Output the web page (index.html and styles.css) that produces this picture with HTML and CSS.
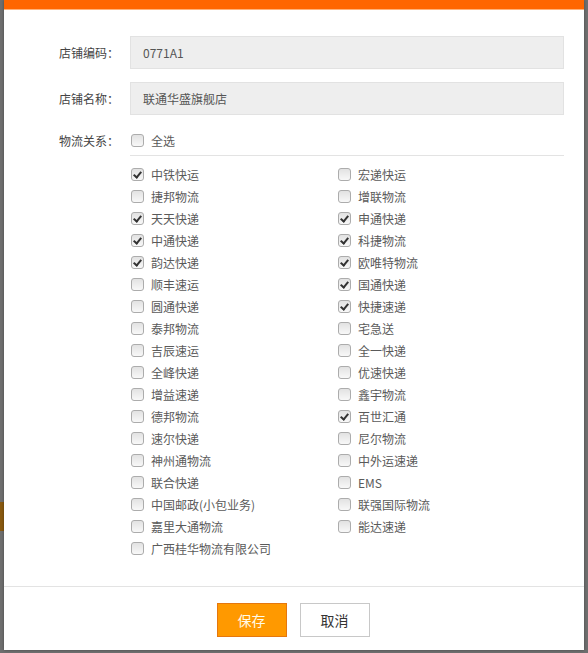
FILE: index.html
```html
<!DOCTYPE html>
<html lang="zh-CN">
<head>
<meta charset="utf-8">
<title>店铺物流关系</title>
<link rel="stylesheet" href="styles.css">
</head>
<body>
<div class="backdrop-hint"></div>
<div class="modal">
  <div class="modal-bar"></div>
  <div class="modal-body">
    <div class="field">
      <span class="label">店铺编码：</span>
      <div class="input">0771A1</div>
    </div>
    <div class="field">
      <span class="label">店铺名称：</span>
      <div class="input">联通华盛旗舰店</div>
    </div>
    <div class="field-check">
      <span class="label">物流关系：</span>
      <label class="opt"><span class="cb"></span>全选</label>
    </div>
    <div class="divider"></div>
    <div class="list">
      <label class="opt"><span class="cb on"></span>中铁快运</label>
      <label class="opt"><span class="cb"></span>宏递快运</label>
      <label class="opt"><span class="cb"></span>捷邦物流</label>
      <label class="opt"><span class="cb"></span>增联物流</label>
      <label class="opt"><span class="cb on"></span>天天快递</label>
      <label class="opt"><span class="cb on"></span>申通快递</label>
      <label class="opt"><span class="cb on"></span>中通快递</label>
      <label class="opt"><span class="cb on"></span>科捷物流</label>
      <label class="opt"><span class="cb on"></span>韵达快递</label>
      <label class="opt"><span class="cb on"></span>欧唯特物流</label>
      <label class="opt"><span class="cb"></span>顺丰速运</label>
      <label class="opt"><span class="cb on"></span>国通快递</label>
      <label class="opt"><span class="cb"></span>圆通快递</label>
      <label class="opt"><span class="cb on"></span>快捷速递</label>
      <label class="opt"><span class="cb"></span>泰邦物流</label>
      <label class="opt"><span class="cb"></span>宅急送</label>
      <label class="opt"><span class="cb"></span>吉辰速运</label>
      <label class="opt"><span class="cb"></span>全一快递</label>
      <label class="opt"><span class="cb"></span>全峰快递</label>
      <label class="opt"><span class="cb"></span>优速快递</label>
      <label class="opt"><span class="cb"></span>增益速递</label>
      <label class="opt"><span class="cb"></span>鑫宇物流</label>
      <label class="opt"><span class="cb"></span>德邦物流</label>
      <label class="opt"><span class="cb on"></span>百世汇通</label>
      <label class="opt"><span class="cb"></span>速尔快递</label>
      <label class="opt"><span class="cb"></span>尼尔物流</label>
      <label class="opt"><span class="cb"></span>神州通物流</label>
      <label class="opt"><span class="cb"></span>中外运速递</label>
      <label class="opt"><span class="cb"></span>联合快递</label>
      <label class="opt"><span class="cb"></span>EMS</label>
      <label class="opt"><span class="cb"></span>中国邮政(小包业务)</label>
      <label class="opt"><span class="cb"></span>联强国际物流</label>
      <label class="opt"><span class="cb"></span>嘉里大通物流</label>
      <label class="opt"><span class="cb"></span>能达速递</label>
      <label class="opt"><span class="cb"></span>广西桂华物流有限公司</label>
    </div>
  </div>
  <div class="modal-footer">
    <button class="btn btn-primary">保存</button>
    <button class="btn btn-default">取消</button>
  </div>
</div>
</body>
</html>
```
FILE: styles.css
```css
html, body {
  margin: 0;
  padding: 0;
}
body {
  width: 588px;
  height: 653px;
  overflow: hidden;
  background: #6f6f6f;
  font-family: "Noto Sans CJK SC", "Liberation Sans", sans-serif;
  font-size: 12px;
  color: #444;
  position: relative;
}
.backdrop-hint {
  position: absolute;
  left: 0;
  top: 502px;
  width: 6px;
  height: 29px;
  background: #8a5a10;
}
.modal {
  position: relative;
  margin-left: 4px;
  width: 580px;
  height: 650px;
  background: #ffffff;
  display: flex;
  flex-direction: column;
  box-shadow: 0 0 3px rgba(0,0,0,0.35);
}
.modal-bar {
  height: 10px;
  background: #ff6600;
  border-bottom: 1px solid #ffb27a;
  box-sizing: border-box;
}
.modal-body {
  padding: 26px 20px 0 55px;
}
.field {
  display: flex;
  align-items: center;
  height: 33px;
  margin-bottom: 13px;
}
.label {
  width: 71px;
  flex: none;
  color: #444;
  white-space: nowrap;
}
.input {
  flex: 1;
  height: 33px;
  box-sizing: border-box;
  background: #eeeeee;
  border: 1px solid #e2e2e2;
  padding: 0 12px;
  display: flex;
  align-items: center;
  color: #555;
}
.field-check {
  display: flex;
  align-items: center;
  height: 24px;
}
.divider {
  margin: 3px 0 0 71px;
  height: 1px;
  background: #e3e3e3;
}
.list {
  margin-left: 71px;
  padding-top: 7px;
  display: grid;
  grid-template-columns: 207px 1fr;
  grid-auto-rows: 22px;
}
.opt {
  display: flex;
  align-items: center;
  color: #5a5a5a;
  white-space: nowrap;
}
.cb {
  position: relative;
  flex: none;
  width: 13px;
  height: 13px;
  box-sizing: border-box;
  margin: 0 7px 0 1px;
  border: 1px solid #acacac;
  border-radius: 3px;
  background: linear-gradient(#e2e2e2, #f8f8f8);
}
.cb.on::after {
  content: "";
  position: absolute;
  left: 3px;
  top: 1px;
  width: 3px;
  height: 6px;
  border-right: 2px solid #333;
  border-bottom: 2px solid #333;
  transform: rotate(40deg);
}
.modal-footer {
  margin-top: auto;
  border-top: 1px solid #e3e3e3;
  height: 64px;
  padding-top: 16px;
  box-sizing: border-box;
  display: flex;
  justify-content: center;
  align-items: flex-start;
  gap: 13px;
  padding-right: 2px;
}
.btn {
  width: 70px;
  height: 34px;
  box-sizing: border-box;
  font-family: "Noto Sans CJK SC", "Liberation Sans", sans-serif;
  font-size: 14px;
  cursor: pointer;
  padding: 0;
}
.btn-primary {
  background: #ff9900;
  border: 1px solid #e5770e;
  color: #fffbe8;
}
.btn-default {
  background: #ffffff;
  border: 1px solid #c8c8c8;
  color: #333;
}
```
